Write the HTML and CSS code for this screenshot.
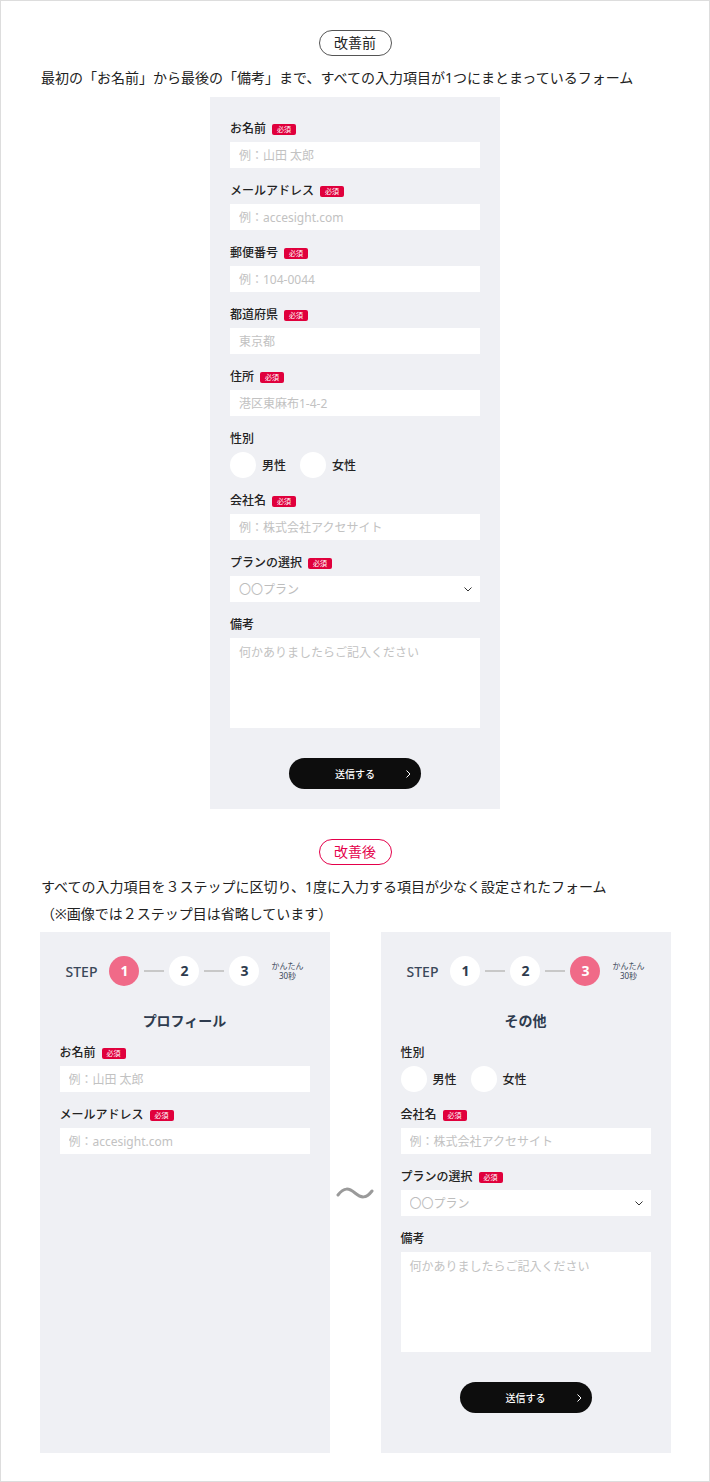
FILE: index.html
```html
<!DOCTYPE html>
<html>
<head>
    <meta charset="utf-8">
    <title>フォーム改善 比較</title>
    <link rel="stylesheet" href="styles.css">
</head>

<body>
<div id="page">
    <!-- before -->
    <section class="compare">
        <div class="tag">改善前</div>
        <p class="desc">最初の「お名前」から最後の「備考」まで、すべての入力項目が1つにまとまっているフォーム</p>

        <form id="single-form" class="form-panel">
            <div class="field">
                <label>お名前<span class="req">必須</span></label>
                <input type="text" placeholder="例：山田 太郎">
            </div>
            <div class="field">
                <label>メールアドレス<span class="req">必須</span></label>
                <input type="text" placeholder="例：accesight.com">
            </div>
            <div class="field">
                <label>郵便番号<span class="req">必須</span></label>
                <input type="text" placeholder="例：104-0044">
            </div>
            <div class="field">
                <label>都道府県<span class="req">必須</span></label>
                <input type="text" placeholder="東京都">
            </div>
            <div class="field">
                <label>住所<span class="req">必須</span></label>
                <input type="text" placeholder="港区東麻布1-4-2">
            </div>
            <div class="field">
                <label>性別</label>
                <div class="radios">
                    <span class="radio"><span class="dot"></span>男性</span>
                    <span class="radio"><span class="dot"></span>女性</span>
                </div>
            </div>
            <div class="field">
                <label>会社名<span class="req">必須</span></label>
                <input type="text" placeholder="例：株式会社アクセサイト">
            </div>
            <div class="field">
                <label>プランの選択<span class="req">必須</span></label>
                <div class="select">
                    <select><option>〇〇プラン</option></select>
                    <svg class="chevron" viewBox="0 0 8 5"><path d="M0.5 0.5 L4 4 L7.5 0.5"/></svg>
                </div>
            </div>
            <div class="field">
                <label>備考</label>
                <textarea class="memo" placeholder="何かありましたらご記入ください"></textarea>
            </div>
            <button type="button" class="submit">送信する
                <svg class="arrow" viewBox="0 0 5 8"><path d="M0.5 0.5 L4 4 L0.5 7.5"/></svg>
            </button>
        </form>
    </section>

    <!-- after -->
    <section class="compare">
        <div class="tag tag-after">改善後</div>
        <p class="desc desc-after">すべての入力項目を３ステップに区切り、1度に入力する項目が少なく設定されたフォーム<br>（※画像では２ステップ目は省略しています）</p>

        <div id="step-forms">
            <form class="form-panel step-panel">
                <div class="steps">
                    <span class="step-label">STEP</span>
                    <span class="num active">1</span>
                    <span class="bar"></span>
                    <span class="num">2</span>
                    <span class="bar"></span>
                    <span class="num">3</span>
                    <span class="easy">かんたん<br>30秒</span>
                </div>
                <h2 class="step-title">プロフィール</h2>
                <div class="field">
                    <label>お名前<span class="req">必須</span></label>
                    <input type="text" placeholder="例：山田 太郎">
                </div>
                <div class="field">
                    <label>メールアドレス<span class="req">必須</span></label>
                    <input type="text" placeholder="例：accesight.com">
                </div>
            </form>

            <div class="wave">
                <svg viewBox="0 0 38 14"><path d="M2 9 C 8 1, 13 2, 19 7 S 30 13, 36 5"/></svg>
            </div>

            <form class="form-panel step-panel">
                <div class="steps">
                    <span class="step-label">STEP</span>
                    <span class="num">1</span>
                    <span class="bar"></span>
                    <span class="num">2</span>
                    <span class="bar"></span>
                    <span class="num active">3</span>
                    <span class="easy">かんたん<br>30秒</span>
                </div>
                <h2 class="step-title">その他</h2>
                <div class="field">
                    <label>性別</label>
                    <div class="radios">
                        <span class="radio"><span class="dot"></span>男性</span>
                        <span class="radio"><span class="dot"></span>女性</span>
                    </div>
                </div>
                <div class="field">
                    <label>会社名<span class="req">必須</span></label>
                    <input type="text" placeholder="例：株式会社アクセサイト">
                </div>
                <div class="field">
                    <label>プランの選択<span class="req">必須</span></label>
                    <div class="select">
                        <select><option>〇〇プラン</option></select>
                        <svg class="chevron" viewBox="0 0 8 5"><path d="M0.5 0.5 L4 4 L7.5 0.5"/></svg>
                    </div>
                </div>
                <div class="field">
                    <label>備考</label>
                    <textarea class="memo memo-tall" placeholder="何かありましたらご記入ください"></textarea>
                </div>
                <button type="button" class="submit">送信する
                    <svg class="arrow" viewBox="0 0 5 8"><path d="M0.5 0.5 L4 4 L0.5 7.5"/></svg>
                </button>
            </form>
        </div>
    </section>
</div>
</body>
</html>
```

FILE: styles.css
```css
body {
    margin: 0;
    background-color: #FFFFFF;
    color: #222222;
    font-family: "Noto Sans", "Noto Sans CJK JP", sans-serif;
}
#page {
    width: 710px;
    height: 1482px;
    box-sizing: border-box;
    border: 1px solid #DDDDDD;
    padding-top: 29px;
}
/* heading pill + description */
.compare + .compare {
    margin-top: 30px;
}
.tag {
    width: 73px;
    margin: 0 auto 8px;
    box-sizing: border-box;
    border: 1px solid #555555;
    border-radius: 13px;
    font-size: 14px;
    line-height: 24px;
    text-align: center;
}
.tag-after {
    border-color: #E4004A;
    color: #E4004A;
}
.desc {
    margin: 0 0 6px;
    padding-left: 40px;
    font-size: 14px;
    line-height: 27px;
}
.desc-after {
    margin-bottom: 5px;
}
/* form panels */
.form-panel {
    margin: 0;
    padding: 23px 20px 20px;
    background-color: #EFF0F4;
}
#single-form {
    width: 290px;
    box-sizing: border-box;
    margin: 0 auto;
}
.field + .field {
    margin-top: 14px;
}
.field label {
    display: flex;
    align-items: center;
    margin-bottom: 4px;
    font-size: 12px;
    font-weight: 500;
    line-height: 18px;
}
.req {
    margin-left: 6px;
    padding: 0 5px;
    border-radius: 2px;
    background-color: #E0003C;
    color: #FFFFFF;
    font-size: 7px;
    line-height: 11px;
    font-weight: 400;
}
.field input, .field select, .memo {
    display: block;
    width: 100%;
    height: 26px;
    box-sizing: border-box;
    margin: 0;
    padding: 0 9px;
    border: none;
    border-radius: 0;
    outline: none;
    background-color: #FFFFFF;
    font-family: "Noto Sans", "Noto Sans CJK JP", sans-serif;
    font-size: 12px;
    color: #BDBDBD;
}
.field input::placeholder, .memo::placeholder {
    color: #C2C2C2;
}
.select {
    position: relative;
}
.field select {
    appearance: none;
    -webkit-appearance: none;
}
.chevron {
    position: absolute;
    top: 11px;
    right: 8px;
    width: 8px;
    height: 5px;
    fill: none;
    stroke: #333333;
    stroke-width: 1;
}
.memo {
    height: 90px;
    padding-top: 6px;
    line-height: 18px;
    resize: none;
}
.memo-tall {
    height: 100px;
}
/* radio buttons */
.radios {
    display: flex;
    height: 26px;
}
.radio {
    display: flex;
    align-items: center;
    font-size: 12px;
    font-weight: 500;
}
.radio + .radio {
    margin-left: 14px;
}
.dot {
    width: 26px;
    height: 26px;
    margin-right: 6px;
    border-radius: 50%;
    background-color: #FFFFFF;
}
/* submit */
.submit {
    position: relative;
    display: block;
    width: 132px;
    height: 31px;
    margin: 30px auto 0;
    border: none;
    border-radius: 16px;
    background-color: #0D0D0D;
    color: #FFFFFF;
    font-family: "Noto Sans", "Noto Sans CJK JP", sans-serif;
    font-size: 10px;
    font-weight: 500;
}
.arrow {
    position: absolute;
    top: 12px;
    right: 10px;
    width: 5px;
    height: 8px;
    fill: none;
    stroke: #FFFFFF;
    stroke-width: 1;
}
/* step forms */
#step-forms {
    display: grid;
    grid-template-columns: 290px 51px 290px;
    justify-content: center;
}
.step-panel {
    padding: 24px 20px 40px;
}
.wave {
    display: flex;
    align-items: center;
    justify-content: center;
}
.wave svg {
    width: 38px;
    height: 14px;
    fill: none;
    stroke: #9A9A9A;
    stroke-width: 3;
    stroke-linecap: round;
}
.steps {
    display: flex;
    align-items: center;
    justify-content: center;
    height: 30px;
    color: #3A4759;
}
.step-label {
    margin-right: 12px;
    font-size: 14px;
    font-weight: 500;
}
.num {
    width: 30px;
    height: 30px;
    border-radius: 50%;
    background-color: #FFFFFF;
    color: #2E3B4E;
    font-size: 14px;
    font-weight: 700;
    line-height: 30px;
    text-align: center;
}
.num.active {
    background-color: #F06A88;
    color: #FFFFFF;
}
.bar {
    width: 20px;
    height: 2px;
    margin: 0 5px;
    background-color: #C8C8C8;
}
.easy {
    margin-left: 12px;
    font-size: 8px;
    line-height: 10px;
    text-align: center;
}
.step-title {
    margin: 25px 0 13px;
    color: #2E3B4E;
    font-size: 14px;
    font-weight: 700;
    line-height: 20px;
    text-align: center;
}
```
